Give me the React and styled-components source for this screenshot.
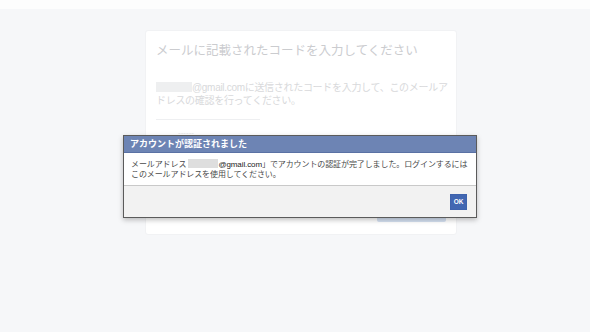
import React from "react";
import styled, { createGlobalStyle } from "styled-components";

const GlobalStyle = createGlobalStyle`
  html, body {
    margin: 0;
    padding: 0;
    background: #f6f7f9;
    font-family: "Liberation Sans", "Noto Sans CJK JP", sans-serif;
  }
`;

const Page = styled.div`
  min-height: 100vh;
  display: flex;
  flex-direction: column;
`;

const TopBar = styled.div`
  height: 9px;
  background: #fdfdfd;
`;

const Main = styled.main`
  display: flex;
  justify-content: center;
  padding: 21px 0 0 12px;
`;

const Card = styled.section`
  width: 312px;
  height: 205px;
  box-sizing: border-box;
  padding: 12px 10px;
  background: #fff;
  border: 1px solid #f1f2f4;
  border-radius: 3px;
  display: flex;
  flex-direction: column;
`;

const CardTitle = styled.h2`
  margin: 0;
  font-size: 12.5px;
  line-height: 16px;
  font-weight: normal;
  color: #cbcccf;
`;

const CardText = styled.p`
  margin: 22px 0 0;
  font-size: 10px;
  line-height: 13px;
  letter-spacing: -0.3px;
  color: #d8d9db;
  width: 296px;
`;

const Masked = styled.span`
  display: inline-block;
  width: ${(p) => p.w}px;
  height: ${(p) => p.h}px;
  vertical-align: ${(p) => p.va}px;
  background: ${(p) => p.bg};
`;

const Field = styled.div`
  margin-top: 12px;
  width: 82px;
  height: 24px;
  border-top: 1px solid #eeeff1;
  display: flex;
  align-items: center;
  padding-left: 22px;
  font-size: 8px;
  color: #e2e3e5;
`;

const CardFooter = styled.div`
  margin-top: auto;
  display: flex;
  justify-content: flex-end;
`;

const GhostButton = styled.div`
  width: 69px;
  height: 22px;
  border-radius: 2px;
  background: #d5e1f2;
`;

const Overlay = styled.div`
  position: fixed;
  inset: 0;
  display: flex;
  justify-content: center;
  align-items: flex-start;
  padding: 135px 0 0 10px;
  box-sizing: border-box;
`;

const Dialog = styled.div`
  width: 354px;
  box-sizing: border-box;
  border: 1px solid #5b5b5b;
  box-shadow: 0 2px 5px rgba(0, 0, 0, 0.25);
`;

const DialogHeader = styled.div`
  height: 17px;
  box-sizing: border-box;
  padding: 0 6px;
  background: #6d84b4;
  border-bottom: 1px solid #5a71a4;
  color: #fff;
  font-size: 9px;
  font-weight: bold;
  line-height: 16px;
`;

const DialogBody = styled.div`
  background: #fff;
  padding: 6px 1px 5px 7px;
  border-bottom: 1px solid #c9c9c9;
  font-size: 8px;
  line-height: 10px;
  letter-spacing: -0.1px;
  color: #4a4a4a;
`;

const Mail = styled.span`
  color: #222;
`;

const DialogFooter = styled.div`
  height: 31px;
  background: #f2f2f2;
  display: flex;
  justify-content: flex-end;
  align-items: center;
  padding-right: 9px;
`;

const OkButton = styled.button`
  width: 17px;
  height: 16px;
  padding: 0;
  border: 1px solid #3f63ad;
  background: #4267b2;
  color: #fff;
  font-family: "Liberation Sans", sans-serif;
  font-size: 6.5px;
  font-weight: bold;
  cursor: pointer;
`;

const App = () => {
  return (
    <>
      <GlobalStyle />
      <Page>
        <TopBar />
        {/* faded page under the dialog */}
        <Main>
          <Card>
            <CardTitle>メールに記載されたコードを入力してください</CardTitle>
            <CardText>
              <Masked w={36} h={10} va={-1} bg="#eeeff0" />
              @gmail.comに送信されたコードを入力して、このメールアドレスの確認を行ってください。
            </CardText>
            <Field>------</Field>
            <CardFooter>
              <GhostButton />
            </CardFooter>
          </Card>
        </Main>

        {/* dialog */}
        <Overlay>
          <Dialog>
            <DialogHeader>アカウントが認証されました</DialogHeader>
            <DialogBody>
              メールアドレス <Masked w={30} h={9} va={-1} bg="#dedede" />
              <Mail>@gmail.com</Mail>」でアカウントの認証が完了しました。ログインするにはこのメールアドレスを使用してください。
            </DialogBody>
            <DialogFooter>
              <OkButton>OK</OkButton>
            </DialogFooter>
          </Dialog>
        </Overlay>
      </Page>
    </>
  );
};

export default App;
